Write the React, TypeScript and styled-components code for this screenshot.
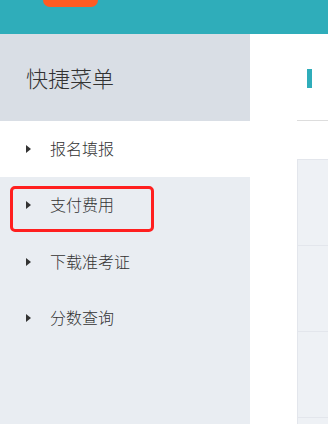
import styled, { createGlobalStyle } from 'styled-components'

const GlobalStyle = createGlobalStyle`
  html, body {
    margin: 0;
    padding: 0;
    background: #ffffff;
    font-family: "Noto Sans CJK SC", "Noto Sans", sans-serif;
    color: #333333;
  }
`

const menuItems = ['报名填报', '支付费用', '下载准考证', '分数查询']

function App() {
  return (
    <>
      <GlobalStyle/>
      <Page>
        <TopBar>
          <Badge/>
        </TopBar>
        <Body>
          <Sidebar>
            <SidebarTitle>快捷菜单</SidebarTitle>
            <MenuList>
              {menuItems.map((label, i) => (
                <MenuItem key={label} $active={i === 0}>
                  <Arrow/>
                  <MenuLabel>{label}</MenuLabel>
                  {i === 1 && <Highlight/>}
                </MenuItem>
              ))}
            </MenuList>
          </Sidebar>
          <Main>
            <TitleRow>
              <TitleMark/>
            </TitleRow>
            <Table>
              <TableRow/>
              <TableRow/>
              <TableRow/>
            </Table>
          </Main>
        </Body>
      </Page>
    </>
  )
}

const Page = styled.div`
  width: 328px;
  height: 424px;
  overflow: hidden;
  display: flex;
  flex-direction: column;
`
const TopBar = styled.div`
  height: 34px;
  flex-shrink: 0;
  background: #2fadba;
  padding-left: 43px;
`
const Badge = styled.div`
  width: 55px;
  height: 7px;
  background: #ff5b22;
  border-radius: 0 0 8px 8px;
`
const Body = styled.div`
  flex: 1;
  display: flex;
`
const Sidebar = styled.div`
  width: 250px;
  flex-shrink: 0;
  background: #e9edf2;
  display: flex;
  flex-direction: column;
`
const SidebarTitle = styled.div`
  height: 87px;
  background: #d9dee5;
  display: flex;
  align-items: center;
  padding-left: 26px;
  padding-bottom: 2px;
  box-sizing: border-box;
  font-size: 22px;
  font-weight: 300;
  color: #333333;
`
const MenuList = styled.div`
  display: flex;
  flex-direction: column;
`
const MenuItem = styled.div<{ $active?: boolean }>`
  position: relative;
  height: 56.3px;
  display: flex;
  align-items: center;
  padding-left: 26px;
  padding-bottom: 2px;
  box-sizing: border-box;
  background: ${p => (p.$active ? '#ffffff' : 'transparent')};
`
const Arrow = styled.span`
  width: 0;
  height: 0;
  border-top: 4px solid transparent;
  border-bottom: 4px solid transparent;
  border-left: 5px solid #333333;
  margin-top: 2px;
  margin-right: 19px;
`
const MenuLabel = styled.span`
  font-size: 16px;
  font-weight: 300;
  color: #333333;
`
const Highlight = styled.div`
  position: absolute;
  left: 10px;
  top: 9px;
  width: 138px;
  height: 40px;
  border: 3px solid #ff1f1f;
  border-radius: 5px;
`
const Main = styled.div`
  flex: 1;
  padding-left: 47px;
  display: flex;
  flex-direction: column;
`
const TitleRow = styled.div`
  height: 86px;
  border-bottom: 1px solid #dddddd;
  display: flex;
  align-items: center;
  padding-left: 10px;
`
const TitleMark = styled.div`
  width: 5px;
  height: 19px;
  background: #2fadba;
  margin-top: 3px;
`
const Table = styled.div`
  margin-top: 38px;
  flex: 1;
  background: #eef1f5;
  border-left: 1px solid #e3e6ec;
  border-top: 1px solid #e3e6ec;
  display: flex;
  flex-direction: column;
`
const TableRow = styled.div`
  height: 85px;
  border-bottom: 1px solid #e3e6ec;
`

export default App
